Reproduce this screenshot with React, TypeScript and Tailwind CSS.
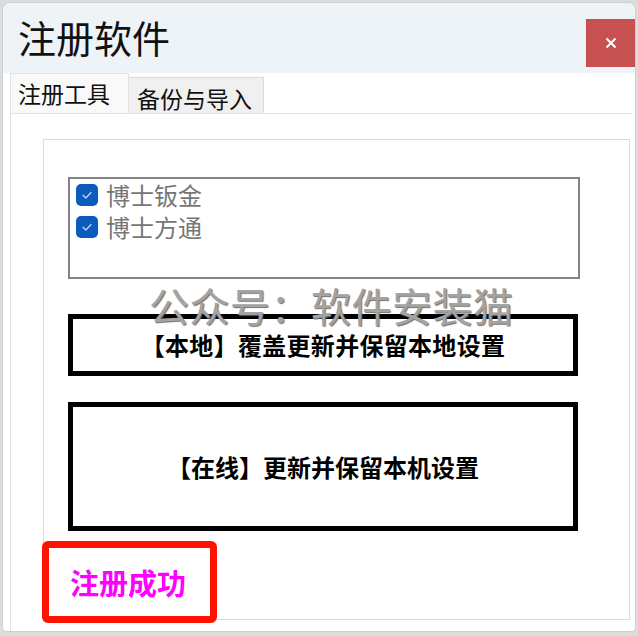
const cjk = "font-['Noto_Sans_CJK_SC','Noto_Sans',sans-serif]";

function CheckItem({ label }: { label: string }) {
  return (
    <div className="flex items-center h-[32px] gap-[8px]">
      <span className="w-[22px] h-[22px] rounded-[5px] bg-[#0b5cbc] flex items-center justify-center">
        <svg width="14" height="14" viewBox="0 0 14 14" fill="none">
          <path d="M3 7.2 L5.8 10 L11 4.6" stroke="#b9d4f3" strokeWidth="1.4" strokeLinecap="round" strokeLinejoin="round" />
        </svg>
      </span>
      <span className="text-[24px] leading-[30px] text-[#767676]">{label}</span>
    </div>
  );
}

export default function App() {
  return (
    <div className={`w-[638px] h-[636px] bg-[#dcdcdc] pt-[2px] px-[2px] pb-[4px] relative ${cjk}`}>
      <div className="w-full h-full bg-white border border-[#cfcfcf] rounded-t-[8px] rounded-b-[4px] flex flex-col overflow-hidden">
        {/* title bar */}
        <div className="h-[70px] bg-[#eef3f8] flex justify-between shrink-0">
          <h1 className="pl-[15px] pt-[11px] text-[38px] leading-[46px] text-[#111]">注册软件</h1>
          <button className="mt-[16px] w-[49px] h-[48px] bg-[#c75050] flex items-center justify-center">
            <svg width="12" height="12" viewBox="0 0 12 12">
              <path d="M1.5 1.5 L10.5 10.5 M10.5 1.5 L1.5 10.5" stroke="white" strokeWidth="2" />
            </svg>
          </button>
        </div>

        {/* tabs */}
        <div className="h-[40px] flex items-end pl-[7px] shrink-0">
          <div className="w-[119px] h-[40px] bg-[#f9f9f9] border-t border-x border-[#e2e2e2] pl-[7px] text-[23px] leading-[38px] text-[#111]">
            注册工具
          </div>
          <div className="w-[135px] h-[36px] bg-[#f0f0f0] border-t border-r border-[#dadada] pl-[8px] text-[23px] leading-[40px] text-[#111]">
            备份与导入
          </div>
        </div>

        {/* tab page */}
        <div className="flex-1 ml-[7px] mr-[3px] border-l border-t border-[#e2e2e2] flex flex-col pt-[25px] pl-[32px] pr-[2px] pb-[11px]">
          <div className="flex-1 border border-[#dcdcdc] bg-white pt-[37px] pl-[24px] pr-[48px] relative">
            <div className="w-[512px] h-[102px] border-2 border-[#858585] pl-[6px] pt-0">
              <CheckItem label="博士钣金" />
              <CheckItem label="博士方通" />
            </div>

            <button className="mt-[35px] w-[510px] h-[62px] border-[5px] border-black bg-white text-[24px] font-bold text-black flex items-center justify-center tracking-[0.3px]">
              【本地】覆盖更新并保留本地设置
            </button>

            <button className="mt-[26px] w-[510px] h-[129px] border-[5px] border-black bg-white text-[24px] font-bold text-black flex items-center justify-center">
              【在线】更新并保留本机设置
            </button>

            {/* watermark */}
            <div className="absolute left-[105px] top-[145px] text-[40px] leading-none text-[#a3a3a3] [text-shadow:1px_1px_1px_#6f6f6f] whitespace-nowrap tracking-[0.5px]">
              公众号：软件安装猫
            </div>
          </div>
        </div>
      </div>

      {/* annotation frame */}
      <div className="absolute left-[42px] top-[541px] w-[175px] h-[82px] border-[7px] border-[#ff1200] rounded-[6px] bg-white flex items-center pl-[21px]">
        <span className="text-[29px] font-bold text-[#ff00ff] leading-none">注册成功</span>
      </div>
    </div>
  );
}
